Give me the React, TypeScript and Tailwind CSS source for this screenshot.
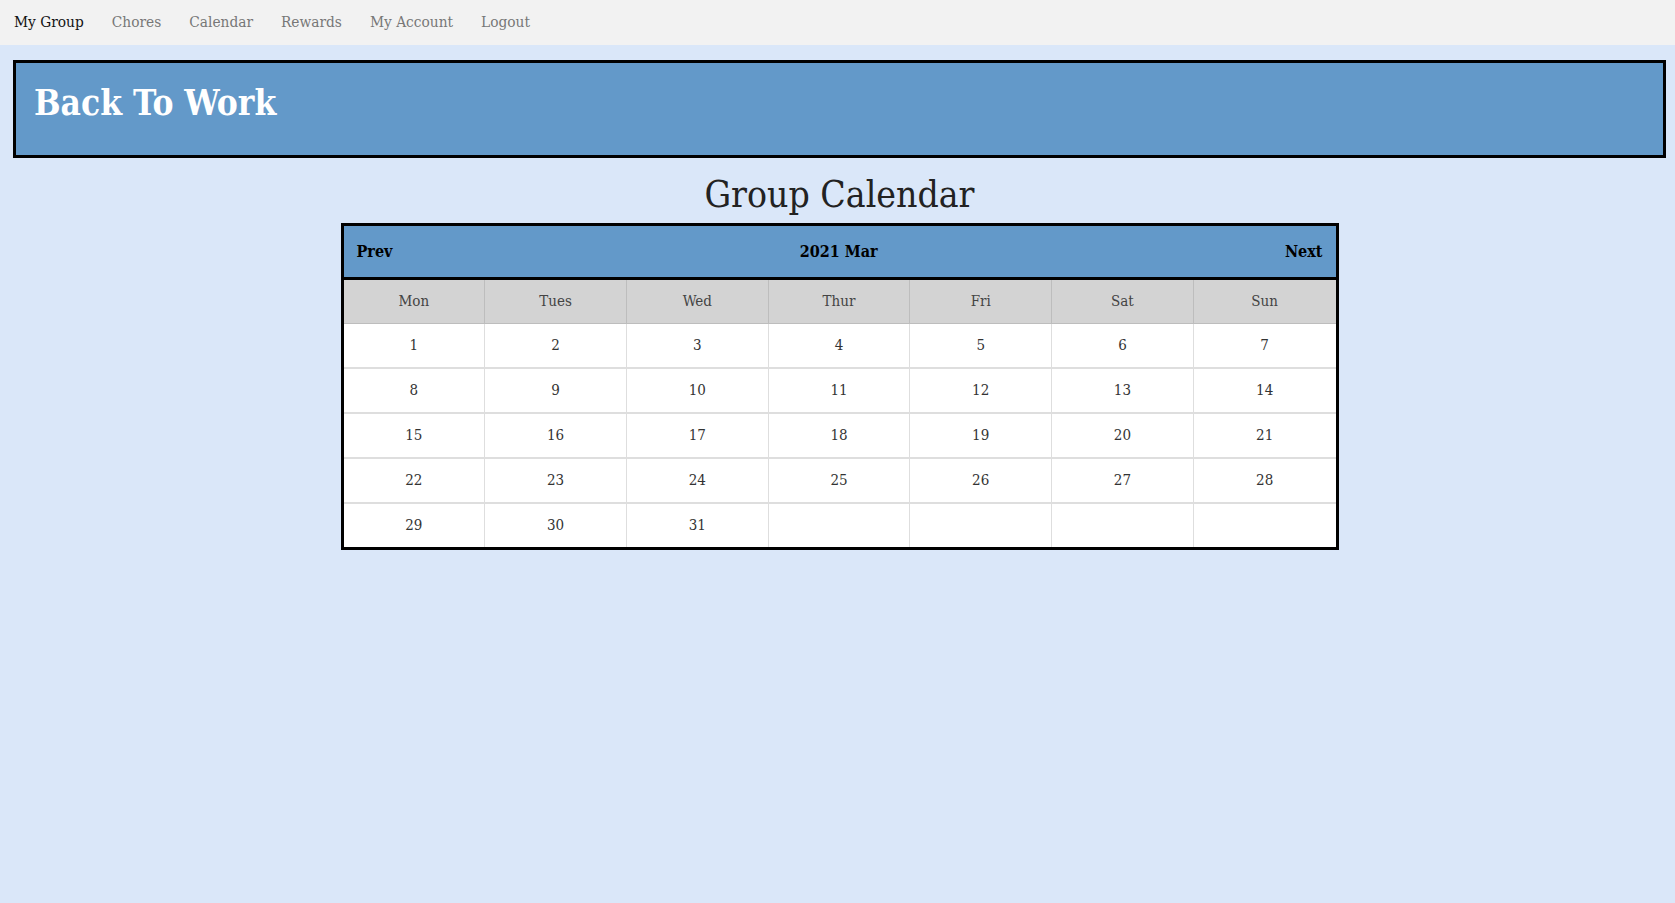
const navItems = ["My Group", "Chores", "Calendar", "Rewards", "My Account", "Logout"];
const days = ["Mon", "Tues", "Wed", "Thur", "Fri", "Sat", "Sun"];

const weeks: (number | null)[][] = [
  [1, 2, 3, 4, 5, 6, 7],
  [8, 9, 10, 11, 12, 13, 14],
  [15, 16, 17, 18, 19, 20, 21],
  [22, 23, 24, 25, 26, 27, 28],
  [29, 30, 31, null, null, null, null],
];

export default function App() {
  return (
    <div
      className="min-h-[903px] bg-[#dae7f9] text-[#222]"
      style={{ fontFamily: '"DejaVu Serif Condensed", "DejaVu Serif", serif' }}
    >
      <nav className="flex h-[45px] items-center bg-[#f2f2f2]">
        {navItems.map((item, i) => (
          <a
            key={item}
            href="#"
            className={`px-[14px] text-[15.3px] ${i === 0 ? "text-[#111]" : "text-[#777]"}`}
          >
            {item}
          </a>
        ))}
      </nav>

      <main className="pl-[13px] pr-[9px]">
        <header className="mt-[15px] h-[98px] border-[3px] border-black bg-[#6399c9] px-[18px] pt-[16px]">
          <h1 className="text-[35px] font-bold leading-[48px] text-white">Back To Work</h1>
        </header>

        <h2 className="mt-[12px] text-center text-[37px] leading-[50px] text-[#222]">Group Calendar</h2>

        <div className="mx-auto mt-[3px] w-[998px] border-[3px] border-black bg-white">
          <div className="flex h-[54px] items-center justify-between border-b-[3px] border-black bg-[#6399c9] px-[13px] text-[16px] font-bold text-black">
            <span>Prev</span>
            <span>2021 Mar</span>
            <span>Next</span>
          </div>
          <div className="grid grid-cols-7 border-b border-[#bdbdbd] bg-[#d3d3d3]">
            {days.map((d, i) => (
              <div
                key={d}
                className={`flex h-[43px] items-center justify-center text-[15px] text-[#444] ${i < 6 ? "border-r border-[#bdbdbd]" : ""}`}
              >
                {d}
              </div>
            ))}
          </div>
          {weeks.map((week, w) => (
            <div key={w} className={`grid grid-cols-7 ${w < 4 ? "border-b-2 border-[#dedede]" : ""}`}>
              {week.map((n, i) => (
                <div
                  key={i}
                  className={`flex h-[43px] items-center justify-center text-[15px] text-[#333] ${i < 6 ? "border-r border-[#dedede]" : ""}`}
                >
                  {n ?? ""}
                </div>
              ))}
            </div>
          ))}
        </div>
      </main>
    </div>
  );
}
